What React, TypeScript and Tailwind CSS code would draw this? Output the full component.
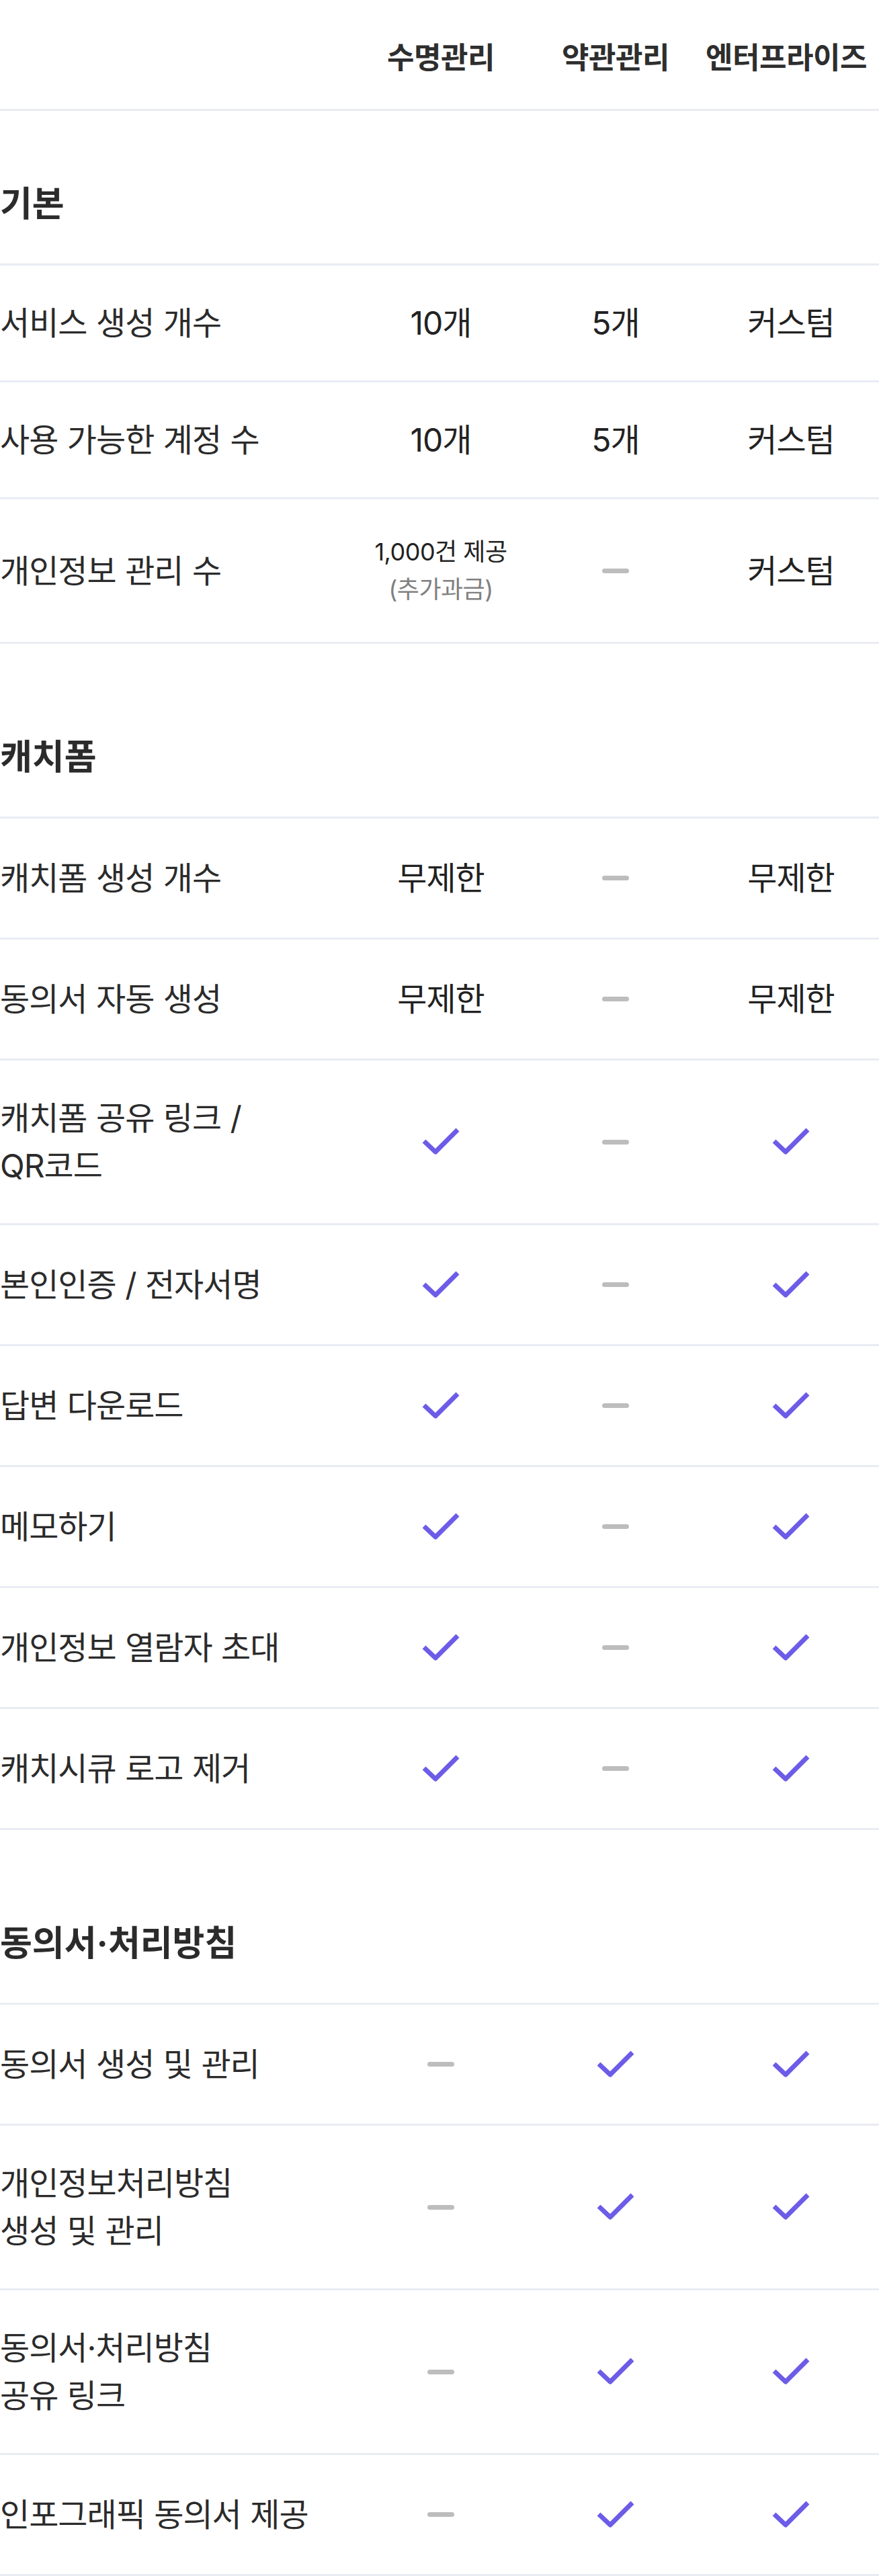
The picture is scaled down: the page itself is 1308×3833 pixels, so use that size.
import { Fragment } from 'react';

type Cell = string | { top: string; sub: string } | 'check' | 'dash';

type Row = {
  label: string[];
  cells: Cell[];
};

type Section = {
  title: string;
  rows: Row[];
};

const sections: Section[] = [
  {
    title: '기본',
    rows: [
      { label: ['서비스 생성 개수'], cells: ['10개', '5개', '커스텀'] },
      { label: ['사용 가능한 계정 수'], cells: ['10개', '5개', '커스텀'] },
      { label: ['개인정보 관리 수'], cells: [{ top: '1,000건 제공', sub: '(추가과금)' }, 'dash', '커스텀'] },
    ],
  },
  {
    title: '캐치폼',
    rows: [
      { label: ['캐치폼 생성 개수'], cells: ['무제한', 'dash', '무제한'] },
      { label: ['동의서 자동 생성'], cells: ['무제한', 'dash', '무제한'] },
      { label: ['캐치폼 공유 링크 /', 'QR코드'], cells: ['check', 'dash', 'check'] },
      { label: ['본인인증 / 전자서명'], cells: ['check', 'dash', 'check'] },
      { label: ['답변 다운로드'], cells: ['check', 'dash', 'check'] },
      { label: ['메모하기'], cells: ['check', 'dash', 'check'] },
      { label: ['개인정보 열람자 초대'], cells: ['check', 'dash', 'check'] },
      { label: ['캐치시큐 로고 제거'], cells: ['check', 'dash', 'check'] },
    ],
  },
  {
    title: '동의서·처리방침',
    rows: [
      { label: ['동의서 생성 및 관리'], cells: ['dash', 'check', 'check'] },
      { label: ['개인정보처리방침', '생성 및 관리'], cells: ['dash', 'check', 'check'] },
      { label: ['동의서·처리방침', '공유 링크'], cells: ['dash', 'check', 'check'] },
      { label: ['인포그래픽 동의서 제공'], cells: ['dash', 'check', 'check'] },
    ],
  },
];

// Inter for latin/digits (close to the original), CJK font picks up the hangul
const font = "font-['Inter','Noto_Sans_CJK_KR',sans-serif]";

const CheckIcon = () => (
  <svg width="56" height="42" viewBox="0 0 56 42" fill="none">
    <polyline
      points="3,20 20,36 53,3"
      stroke="#6C5CE7"
      strokeWidth="7"
      strokeLinejoin="round"
      fill="none"
    />
  </svg>
);

const renderCell = (cell: Cell) => {
  if (cell === 'check') {
    return (
      <div className="h-[77px] flex items-center justify-center">
        <CheckIcon />
      </div>
    );
  }
  if (cell === 'dash') {
    return (
      <div className="h-[77px] flex items-center justify-center">
        <div className="w-[40px] h-[7px] rounded-full bg-[#BDBDBD]" />
      </div>
    );
  }
  if (typeof cell === 'object') {
    return (
      <div className="flex flex-col items-center text-[36px] leading-[56px] tracking-[-0.5px] whitespace-nowrap">
        <span className="text-[#222222]">{cell.top}</span>
        <span className="text-[#808080]">{cell.sub}</span>
      </div>
    );
  }
  return <span className="text-[48px] leading-[71px] tracking-[-1px] text-[#222222]">{cell}</span>;
};

export default function App() {
  return (
    <div className={`w-[1308px] bg-white ${font} text-[#2b2b2b]`}>
      {/* Plan header */}
      <div className="grid grid-cols-[526px_260px_260px_1fr] h-[165px] pt-[10px] items-center border-b-[3px] border-[#E9ECF3]">
        <div />
        <div className="flex justify-center">
          <span className="text-[44px] font-bold tracking-[-0.5px] text-[#2e2e2e] whitespace-nowrap">수명관리</span>
        </div>
        <div className="flex justify-center">
          <span className="text-[44px] font-bold tracking-[-0.5px] text-[#2e2e2e] whitespace-nowrap">약관관리</span>
        </div>
        <div className="flex justify-center pr-[14px]">
          <span className="text-[44px] font-bold tracking-[-0.5px] text-[#2e2e2e] whitespace-nowrap">엔터프라이즈</span>
        </div>
      </div>

      {sections.map((section, i) => (
        <Fragment key={section.title}>
          {/* Section title */}
          <div
            className={`${i === 0 ? 'pt-[101px]' : 'pt-[131px]'} pb-[51px] border-b-[3px] border-[#E9ECF3]`}
          >
            <h2 className="text-[52px] leading-[75px] font-bold tracking-normal text-[#2b2b2b]">
              {section.title}
            </h2>
          </div>

          {section.rows.map((row) => (
            <div
              key={row.label.join('')}
              className="grid grid-cols-[526px_260px_260px_1fr] items-center py-[50px] border-b-[3px] border-[#E9ECF3]"
            >
              <div className="text-[48px] leading-[71px] tracking-[-1px] [word-spacing:1px] text-[#2b2b2b]">
                {row.label.map((line) => (
                  <div key={line}>{line}</div>
                ))}
              </div>
              {row.cells.map((cell, j) => (
                <div key={j} className="flex justify-center">
                  {renderCell(cell)}
                </div>
              ))}
            </div>
          ))}
        </Fragment>
      ))}
    </div>
  );
}
